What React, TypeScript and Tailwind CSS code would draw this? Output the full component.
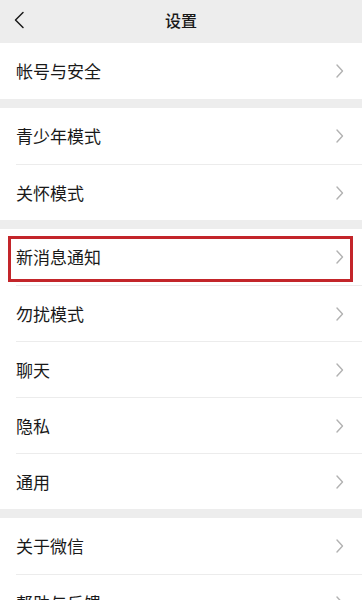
import React from 'react';

interface Row {
    label: string;
    highlight?: boolean;
}

const sections: Row[][] = [
    [{ label: '帐号与安全' }],
    [{ label: '青少年模式' }, { label: '关怀模式' }],
    [
        { label: '新消息通知', highlight: true },
        { label: '勿扰模式' },
        { label: '聊天' },
        { label: '隐私' },
        { label: '通用' },
    ],
    [{ label: '关于微信' }, { label: '帮助与反馈' }],
];

const Chevron = () => (
    <svg width="8" height="14" viewBox="0 0 8 14" fill="none" className="mr-[18px]">
        <path d="M1 1l5.5 6L1 13" stroke="#b2b2b2" strokeWidth="1.4" strokeLinecap="round" strokeLinejoin="round" />
    </svg>
);

const SettingRow = ({ row, first }: { row: Row; first: boolean }) => (
    <div className="relative pl-4">
        {!first && <div className="h-px bg-[#ececec]" />}
        <div className={`flex items-center justify-between ${first ? 'h-[56px]' : 'h-[55px]'}`}>
            <span className="text-[17px] text-[#191919]">{row.label}</span>
            <Chevron />
        </div>
        {row.highlight && (
            <div className="absolute top-[7px] bottom-[3px] left-[8px] right-[9px] border-[3px] border-[#c3252a] pointer-events-none" />
        )}
    </div>
);

export default function App() {
    return (
        <div
            className="w-[362px] h-[600px] overflow-hidden bg-[#ededed]"
            style={{ fontFamily: '"Noto Sans CJK SC", "Noto Sans", sans-serif' }}
        >
            <div className="relative h-[43px] flex items-center justify-center">
                <svg width="12" height="18" viewBox="0 0 12 18" fill="none" className="absolute left-[13px] top-[11px]">
                    <path d="M10 1.5L2.5 9l7.5 7.5" stroke="#1a1a1a" strokeWidth="1.5" strokeLinecap="round" strokeLinejoin="round" />
                </svg>
                <span className="text-[16px] font-medium text-[#191919] -mt-[4px]">设置</span>
            </div>
            <div className="flex flex-col gap-[9px]">
                {sections.map((section, i) => (
                    <div key={i} className="bg-white">
                        {section.map((row, j) => (
                            <SettingRow key={row.label} row={row} first={j === 0} />
                        ))}
                    </div>
                ))}
            </div>
        </div>
    );
}
